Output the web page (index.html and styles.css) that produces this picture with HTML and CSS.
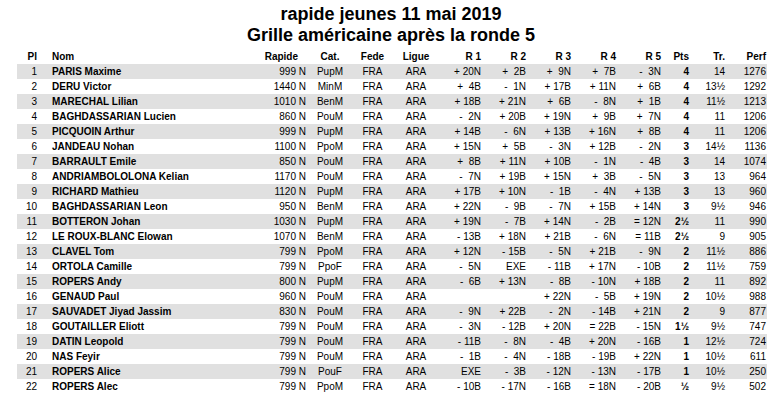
FILE: index.html
```html
<!DOCTYPE html>
<html lang="fr">
<head>
<meta charset="utf-8">
<title>Grille américaine</title>
<link rel="stylesheet" href="styles.css">
</head>
<body>
<div class="page">
  <div class="title">
    <div>rapide jeunes 11 mai 2019</div>
    <div>Grille américaine après la ronde 5</div>
  </div>
  <table class="grid">
    <colgroup>
      <col class="c-pl"><col class="c-nom"><col class="c-rap"><col class="c-cat"><col class="c-fede"><col class="c-ligue">
      <col class="c-r1"><col class="c-r"><col class="c-r"><col class="c-r"><col class="c-r">
      <col class="c-pts"><col class="c-tr"><col class="c-perf">
    </colgroup>
    <thead>
      <tr>
        <th class="pl">Pl</th><th class="nom">Nom</th><th class="rap">Rapide</th><th class="cat">Cat.</th><th class="fede">Fede</th><th class="ligue">Ligue</th>
        <th class="r">R 1</th><th class="r">R 2</th><th class="r">R 3</th><th class="r">R 4</th><th class="r">R 5</th>
        <th class="pts">Pts</th><th class="tr">Tr.</th><th class="perf">Perf</th>
      </tr>
    </thead>
    <tbody>
      <tr><td class="pl">1</td><td class="nom">PARIS Maxime</td><td class="rap">999 N</td><td class="cat">PupM</td><td class="fede">FRA</td><td class="ligue">ARA</td><td class="r">+ 20N</td><td class="r">+  2B</td><td class="r">+  9N</td><td class="r">+  7B</td><td class="r">-  3N</td><td class="pts">4</td><td class="tr">14</td><td class="perf">1276</td></tr>
      <tr><td class="pl">2</td><td class="nom">DERU Victor</td><td class="rap">1440 N</td><td class="cat">MinM</td><td class="fede">FRA</td><td class="ligue">ARA</td><td class="r">+  4B</td><td class="r">-  1N</td><td class="r">+ 17B</td><td class="r">+ 11N</td><td class="r">+  6B</td><td class="pts">4</td><td class="tr">13½</td><td class="perf">1292</td></tr>
      <tr><td class="pl">3</td><td class="nom">MARECHAL Lilian</td><td class="rap">1010 N</td><td class="cat">BenM</td><td class="fede">FRA</td><td class="ligue">ARA</td><td class="r">+ 18B</td><td class="r">+ 21N</td><td class="r">+  6B</td><td class="r">-  8N</td><td class="r">+  1B</td><td class="pts">4</td><td class="tr">11½</td><td class="perf">1213</td></tr>
      <tr><td class="pl">4</td><td class="nom">BAGHDASSARIAN Lucien</td><td class="rap">860 N</td><td class="cat">PouM</td><td class="fede">FRA</td><td class="ligue">ARA</td><td class="r">-  2N</td><td class="r">+ 20B</td><td class="r">+ 19N</td><td class="r">+  9B</td><td class="r">+  7N</td><td class="pts">4</td><td class="tr">11</td><td class="perf">1206</td></tr>
      <tr><td class="pl">5</td><td class="nom">PICQUOIN Arthur</td><td class="rap">999 N</td><td class="cat">PupM</td><td class="fede">FRA</td><td class="ligue">ARA</td><td class="r">+ 14B</td><td class="r">-  6N</td><td class="r">+ 13B</td><td class="r">+ 16N</td><td class="r">+  8B</td><td class="pts">4</td><td class="tr">11</td><td class="perf">1206</td></tr>
      <tr><td class="pl">6</td><td class="nom">JANDEAU Nohan</td><td class="rap">1100 N</td><td class="cat">PpoM</td><td class="fede">FRA</td><td class="ligue">ARA</td><td class="r">+ 15N</td><td class="r">+  5B</td><td class="r">-  3N</td><td class="r">+ 12B</td><td class="r">-  2N</td><td class="pts">3</td><td class="tr">14½</td><td class="perf">1136</td></tr>
      <tr><td class="pl">7</td><td class="nom">BARRAULT Emile</td><td class="rap">850 N</td><td class="cat">PouM</td><td class="fede">FRA</td><td class="ligue">ARA</td><td class="r">+  8B</td><td class="r">+ 11N</td><td class="r">+ 10B</td><td class="r">-  1N</td><td class="r">-  4B</td><td class="pts">3</td><td class="tr">14</td><td class="perf">1074</td></tr>
      <tr><td class="pl">8</td><td class="nom">ANDRIAMBOLOLONA Kelian</td><td class="rap">1170 N</td><td class="cat">PouM</td><td class="fede">FRA</td><td class="ligue">ARA</td><td class="r">-  7N</td><td class="r">+ 19B</td><td class="r">+ 15N</td><td class="r">+  3B</td><td class="r">-  5N</td><td class="pts">3</td><td class="tr">13</td><td class="perf">964</td></tr>
      <tr><td class="pl">9</td><td class="nom">RICHARD Mathieu</td><td class="rap">1120 N</td><td class="cat">PupM</td><td class="fede">FRA</td><td class="ligue">ARA</td><td class="r">+ 17B</td><td class="r">+ 10N</td><td class="r">-  1B</td><td class="r">-  4N</td><td class="r">+ 13B</td><td class="pts">3</td><td class="tr">13</td><td class="perf">960</td></tr>
      <tr><td class="pl">10</td><td class="nom">BAGHDASSARIAN Leon</td><td class="rap">950 N</td><td class="cat">BenM</td><td class="fede">FRA</td><td class="ligue">ARA</td><td class="r">+ 22N</td><td class="r">-  9B</td><td class="r">-  7N</td><td class="r">+ 15B</td><td class="r">+ 14N</td><td class="pts">3</td><td class="tr">9½</td><td class="perf">946</td></tr>
      <tr><td class="pl">11</td><td class="nom">BOTTERON Johan</td><td class="rap">1030 N</td><td class="cat">PupM</td><td class="fede">FRA</td><td class="ligue">ARA</td><td class="r">+ 19N</td><td class="r">-  7B</td><td class="r">+ 14N</td><td class="r">-  2B</td><td class="r">= 12N</td><td class="pts">2½</td><td class="tr">11</td><td class="perf">990</td></tr>
      <tr><td class="pl">12</td><td class="nom">LE ROUX-BLANC Elowan</td><td class="rap">1070 N</td><td class="cat">BenM</td><td class="fede">FRA</td><td class="ligue">ARA</td><td class="r">- 13B</td><td class="r">+ 18N</td><td class="r">+ 21B</td><td class="r">-  6N</td><td class="r">= 11B</td><td class="pts">2½</td><td class="tr">9</td><td class="perf">905</td></tr>
      <tr><td class="pl">13</td><td class="nom">CLAVEL Tom</td><td class="rap">799 N</td><td class="cat">PpoM</td><td class="fede">FRA</td><td class="ligue">ARA</td><td class="r">+ 12N</td><td class="r">- 15B</td><td class="r">-  5N</td><td class="r">+ 21B</td><td class="r">-  9N</td><td class="pts">2</td><td class="tr">11½</td><td class="perf">886</td></tr>
      <tr><td class="pl">14</td><td class="nom">ORTOLA Camille</td><td class="rap">799 N</td><td class="cat">PpoF</td><td class="fede">FRA</td><td class="ligue">ARA</td><td class="r">-  5N</td><td class="r">EXE</td><td class="r">- 11B</td><td class="r">+ 17N</td><td class="r">- 10B</td><td class="pts">2</td><td class="tr">11½</td><td class="perf">759</td></tr>
      <tr><td class="pl">15</td><td class="nom">ROPERS Andy</td><td class="rap">800 N</td><td class="cat">PupM</td><td class="fede">FRA</td><td class="ligue">ARA</td><td class="r">-  6B</td><td class="r">+ 13N</td><td class="r">-  8B</td><td class="r">- 10N</td><td class="r">+ 18B</td><td class="pts">2</td><td class="tr">11</td><td class="perf">892</td></tr>
      <tr><td class="pl">16</td><td class="nom">GENAUD Paul</td><td class="rap">960 N</td><td class="cat">PouM</td><td class="fede">FRA</td><td class="ligue">ARA</td><td class="r"></td><td class="r"></td><td class="r">+ 22N</td><td class="r">-  5B</td><td class="r">+ 19N</td><td class="pts">2</td><td class="tr">10½</td><td class="perf">988</td></tr>
      <tr><td class="pl">17</td><td class="nom">SAUVADET Jiyad Jassim</td><td class="rap">830 N</td><td class="cat">PouM</td><td class="fede">FRA</td><td class="ligue">ARA</td><td class="r">-  9N</td><td class="r">+ 22B</td><td class="r">-  2N</td><td class="r">- 14B</td><td class="r">+ 21N</td><td class="pts">2</td><td class="tr">9</td><td class="perf">877</td></tr>
      <tr><td class="pl">18</td><td class="nom">GOUTAILLER Eliott</td><td class="rap">799 N</td><td class="cat">PouM</td><td class="fede">FRA</td><td class="ligue">ARA</td><td class="r">-  3N</td><td class="r">- 12B</td><td class="r">+ 20N</td><td class="r">= 22B</td><td class="r">- 15N</td><td class="pts">1½</td><td class="tr">9½</td><td class="perf">747</td></tr>
      <tr><td class="pl">19</td><td class="nom">DATIN Leopold</td><td class="rap">799 N</td><td class="cat">PouM</td><td class="fede">FRA</td><td class="ligue">ARA</td><td class="r">- 11B</td><td class="r">-  8N</td><td class="r">-  4B</td><td class="r">+ 20N</td><td class="r">- 16B</td><td class="pts">1</td><td class="tr">12½</td><td class="perf">724</td></tr>
      <tr><td class="pl">20</td><td class="nom">NAS Feyir</td><td class="rap">799 N</td><td class="cat">PouM</td><td class="fede">FRA</td><td class="ligue">ARA</td><td class="r">-  1B</td><td class="r">-  4N</td><td class="r">- 18B</td><td class="r">- 19B</td><td class="r">+ 22N</td><td class="pts">1</td><td class="tr">10½</td><td class="perf">611</td></tr>
      <tr><td class="pl">21</td><td class="nom">ROPERS Alice</td><td class="rap">799 N</td><td class="cat">PouF</td><td class="fede">FRA</td><td class="ligue">ARA</td><td class="r">EXE</td><td class="r">-  3B</td><td class="r">- 12N</td><td class="r">- 13N</td><td class="r">- 17B</td><td class="pts">1</td><td class="tr">10½</td><td class="perf">250</td></tr>
      <tr><td class="pl">22</td><td class="nom">ROPERS Alec</td><td class="rap">799 N</td><td class="cat">PpoM</td><td class="fede">FRA</td><td class="ligue">ARA</td><td class="r">- 10B</td><td class="r">- 17N</td><td class="r">- 16B</td><td class="r">= 18N</td><td class="r">- 20B</td><td class="pts">½</td><td class="tr">9½</td><td class="perf">502</td></tr>
    </tbody>
  </table>
</div>
</body>
</html>
```

FILE: styles.css
```css
html, body {
  margin: 0;
  padding: 0;
  background: #ffffff;
}

body {
  font-family: "Liberation Sans", Arial, sans-serif;
  color: #000000;
}

.page {
  padding-top: 4px;
}

.title {
  text-align: center;
  font-size: 18px;
  font-weight: bold;
  line-height: 21px;
}

.grid {
  margin: 3px 0 0 17px;
  width: 750px;
  table-layout: fixed;
  border-collapse: collapse;
  border-spacing: 0;
  font-size: 10px;
}

.c-pl { width: 25px; }
.c-nom { width: 198px; }
.c-rap { width: 70px; }
.c-cat { width: 40px; }
.c-fede { width: 45px; }
.c-ligue { width: 42px; }
.c-r1 { width: 48px; }
.c-r { width: 45px; }
.c-pts { width: 28px; }
.c-tr { width: 36px; }
.c-perf { width: 38px; }

.grid th,
.grid td {
  height: 15px;
  padding: 0;
  line-height: 15px;
  white-space: pre;
  overflow: hidden;
}

.grid th {
  font-weight: bold;
}

.grid tbody tr:nth-child(odd) {
  background: #e0e0e0;
}

.pl { text-align: right; padding-right: 5px !important; }
.nom { text-align: left; padding-left: 10px !important; font-weight: bold; }
.rap { text-align: right; padding-right: 4px !important; }
th.rap { padding-right: 12px !important; }
.cat { text-align: center; }
.fede { text-align: center; }
.ligue { text-align: center; }
.r { text-align: right; padding-right: 4px !important; }
.pts { text-align: right; padding-right: 4px !important; font-weight: bold; }
.tr { text-align: right; padding-right: 4px !important; }
.perf { text-align: right; padding-right: 1px !important; }
```
